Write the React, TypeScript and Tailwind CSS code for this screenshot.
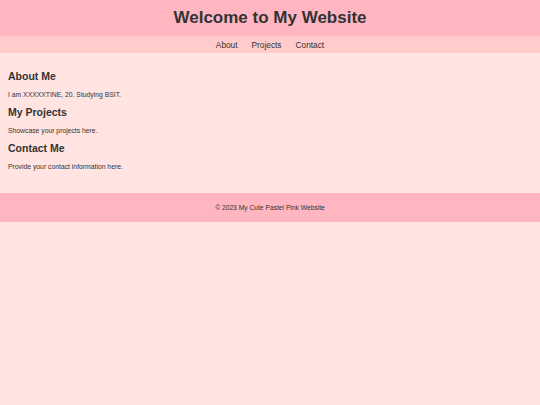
import React from "react";

export default function App() {
  return (
    <div className="min-h-[405px] w-full bg-[#ffe4e1] text-[#333] font-['Liberation_Sans',Arial,sans-serif]">
      <header className="h-[36px] bg-[#ffb6c1] flex items-center justify-center">
        <h1 className="text-[17px] leading-[20px] font-bold">Welcome to My Website</h1>
      </header>
      <nav className="h-[17px] bg-[#ffcccb] flex items-center justify-center gap-[14px] text-[8.3px] leading-[10px]">
        <a>About</a>
        <a>Projects</a>
        <a>Contact</a>
      </nav>
      <main className="px-[8px] pt-[17px] pb-[22px] flex flex-col">
        <section className="flex flex-col">
          <h2 className="text-[10.5px] leading-[12px] font-bold">About Me</h2>
          <p className="mt-[9px] mb-[7px] text-[6.8px] leading-[8px]">I am XXXXXTINE, 20. Studying BSIT.</p>
        </section>
        <section className="flex flex-col">
          <h2 className="text-[10.5px] leading-[12px] font-bold">My Projects</h2>
          <p className="mt-[9px] mb-[7px] text-[6.8px] leading-[8px]">Showcase your projects here.</p>
        </section>
        <section className="flex flex-col">
          <h2 className="text-[10.5px] leading-[12px] font-bold">Contact Me</h2>
          <p className="mt-[9px] text-[6.8px] leading-[8px]">Provide your contact information here.</p>
        </section>
      </main>
      <footer className="h-[29px] bg-[#ffb6c1] flex items-center justify-center text-[6.7px] leading-[8px]">
        © 2023 My Cute Pastel Pink Website
      </footer>
    </div>
  );
}
